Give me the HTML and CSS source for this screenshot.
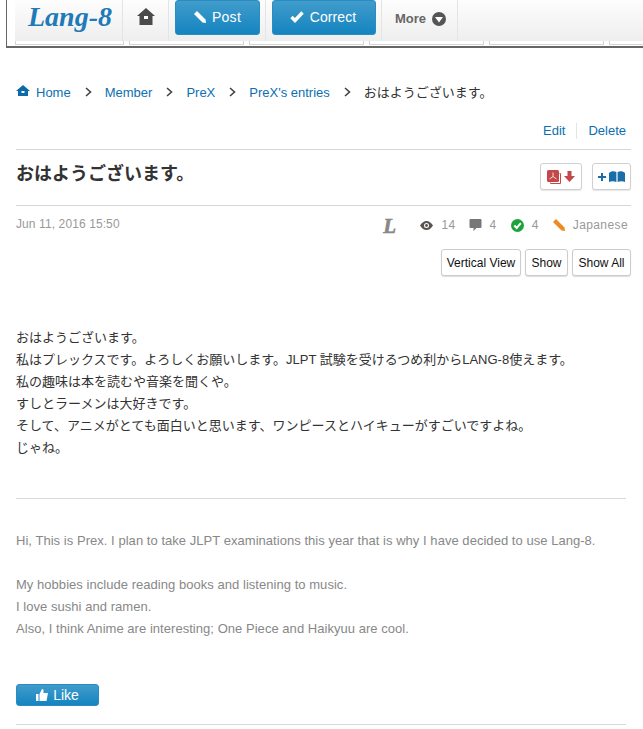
FILE: index.html
```html
<!DOCTYPE html>
<html lang="ja">
<head>
<meta charset="utf-8">
<title>おはようございます。</title>
<link rel="stylesheet" href="styles.css">
</head>
<body>
<header class="topbar">
  <div class="tabstrip">
    <span class="tabpiece t1"></span><span class="tabpiece t2"></span><span class="tabpiece t3"></span><span class="tabpiece t4"></span><span class="tabpiece t5"></span><span class="tabpiece t6"></span>
  </div>
  <nav class="nav">
    <a class="logo">Lang-8</a>
    <a class="homecell">
      <svg class="homeicon" viewBox="0 0 18 18"><path fill="#4a4a4a" d="M9 0 L18 8 L15.500 8 L15.500 17 L2.500 17 L2.500 8 L0 8 Z"/><rect x="7" y="8" width="4" height="3" fill="#fff"/></svg>
    </a>
    <div class="btncell first"><a class="bluebtn post">
      <svg class="pencil" viewBox="0 0 12 12"><path fill="#fff" d="M0 3 L3 0 L11.500 8.500 L12 12 L8.500 11.500 Z"/></svg>Post</a></div>
    <div class="btncell second"><a class="bluebtn correct">
      <svg class="check" viewBox="0 0 14 12"><path fill="none" stroke="#fff" stroke-width="3.400" d="M1.500 6 L5 9.500 L12.500 1.500"/></svg>Correct</a></div>
    <a class="more">More
      <svg class="moreicon" viewBox="0 0 14 14"><circle cx="7" cy="7" r="7" fill="#555"/><path fill="#fff" d="M3 5 H11 L7 10.500 Z"/></svg></a>
    <span class="navrest"></span>
  </nav>
</header>

<main class="page">
  <ol class="crumbs">
    <li><svg class="crumbhome" viewBox="0 0 14 12"><path fill="#0d6aa8" d="M7 0 L14 6 L12 6 L12 11 L2 11 L2 6 L0 6 Z"/><rect x="5.500" y="6" width="3" height="2" fill="#fff"/></svg><a>Home</a></li>
    <li class="sep"><svg viewBox="0 0 7 10"><path fill="none" stroke="#444" stroke-width="1.600" d="M1 1 L5.500 5 L1 9"/></svg></li>
    <li><a>Member</a></li>
    <li class="sep"><svg viewBox="0 0 7 10"><path fill="none" stroke="#444" stroke-width="1.600" d="M1 1 L5.500 5 L1 9"/></svg></li>
    <li><a>PreX</a></li>
    <li class="sep"><svg viewBox="0 0 7 10"><path fill="none" stroke="#444" stroke-width="1.600" d="M1 1 L5.500 5 L1 9"/></svg></li>
    <li><a>PreX's entries</a></li>
    <li class="sep"><svg viewBox="0 0 7 10"><path fill="none" stroke="#444" stroke-width="1.600" d="M1 1 L5.500 5 L1 9"/></svg></li>
    <li class="current">おはようございます。</li>
  </ol>

  <div class="actions"><a class="action">Edit</a><a class="action last">Delete</a></div>

  <div class="titlerow">
    <h1 class="title">おはようございます。</h1>
    <div class="titlebtns">
      <a class="iconbtn pdf">
        <svg class="pdficon" viewBox="0 0 14 14"><path fill="none" stroke="#c9474a" d="M12.500 3.500 H13.500 V13.500 H3.500 V12.500"/><rect x="0" y="0" width="12" height="12" rx="1.500" fill="#c4474a"/><path fill="none" stroke="#fff" stroke-width="0.800" d="M6 2.500 L6 6.500 M6 6.500 L2.500 9 M6 6.500 L9.500 9"/></svg>
        <svg class="arrow" viewBox="0 0 11 11"><path fill="#c4474a" d="M3.500 0 H7.500 V5 H11 L5.500 11 L0 5 H3.500 Z"/></svg>
      </a>
      <a class="iconbtn book">
        <svg class="plus" viewBox="0 0 8 8"><path fill="#1a6ea8" d="M3 0 H5 V3 H8 V5 H5 V8 H3 V5 H0 V3 H3 Z"/></svg>
        <svg class="bookicon" viewBox="0 0 16 11"><path fill="#1a6ea8" d="M0 2 C2 0 5 0 7.400 1 V11 C5 10 2 10 0 11 Z M8.600 1 C11 0 14 0 16 2 V11 C14 10 11 10 8.600 11 Z"/></svg>
      </a>
    </div>
  </div>

  <div class="metarow">
    <time class="date">Jun 11, 2016 15:50</time>
    <div class="stats">
      <span class="l-mark">L</span>
      <span class="stat eye"><svg class="eyeicon" viewBox="0 0 13 9"><path fill="#5a5450" fill-rule="evenodd" d="M0 4.500 C2 1.500 4 0 6.500 0 C9 0 11 1.500 13 4.500 C11 7.500 9 9 6.500 9 C4 9 2 7.500 0 4.500 Z M6.500 2 A2.500 2.500 0 1 0 6.500 7 A2.500 2.500 0 1 0 6.500 2 Z"/><circle cx="6.500" cy="4.500" r="1.400" fill="#5a5450"/></svg>14</span>
      <span class="stat bubble"><svg class="bubbleicon" viewBox="0 0 12 12"><path fill="#777" d="M1 0 H11 A1 1 0 0 1 12 1 V8 A1 1 0 0 1 11 9 H7 L4 12 V9 H1 A1 1 0 0 1 0 8 V1 A1 1 0 0 1 1 0 Z"/></svg>4</span>
      <span class="stat ok"><svg class="okicon" viewBox="0 0 13 13"><circle cx="6.500" cy="6.500" r="6.500" fill="#1fa23d"/><path fill="none" stroke="#fff" stroke-width="2" d="M3.300 6.500 L5.700 9 L9.800 4.200"/></svg>4</span>
      <span class="stat lang"><svg class="langicon" viewBox="0 0 12 12"><path fill="#ee8a22" d="M0 3 L3 0 L11.500 8.500 L12 12 L8.500 11.500 Z"/></svg>Japanese</span>
    </div>
  </div>

  <div class="viewbtns">
    <button class="viewbtn vertical">Vertical View</button><button class="viewbtn show">Show</button><button class="viewbtn showall">Show All</button>
  </div>

  <section class="entry">
    <p>おはようございます。</p>
    <p>私はプレックスです。よろしくお願いします。JLPT 試験を受けるつめ利からLANG-8使えます。</p>
    <p>私の趣味は本を読むや音楽を聞くや。</p>
    <p>すしとラーメンは大好きです。</p>
    <p>そして、アニメがとても面白いと思います、ワンピースとハイキューがすごいですよね。</p>
    <p>じゃね。</p>
  </section>

  <hr class="rule">

  <section class="translation">
    <p class="gap">Hi, This is Prex. I plan to take JLPT examinations this year that is why I have decided to use Lang-8.</p>
    <p>My hobbies include reading books and listening to music.</p>
    <p>I love sushi and ramen.</p>
    <p>Also, I think Anime are interesting; One Piece and Haikyuu are cool.</p>
  </section>

  <a class="bluebtn like"><svg class="thumb" viewBox="0 0 12 12"><path fill="#fff" d="M0 5 H2.500 V12 H0 Z M3.500 5 L6 0 C7.500 0 8 1.500 7.300 4 H12 L10.500 12 H3.500 Z"/></svg>Like</a>

  <hr class="rule endrule">
</main>
</body>
</html>
```

FILE: styles.css
```css
* { box-sizing: border-box; }
html, body { margin: 0; padding: 0; background: #fff; }
body {
  width: 643px;
  height: 729px;
  overflow: hidden;
  font-family: "Liberation Sans", "Noto Sans CJK JP", sans-serif;
  font-size: 13px;
  color: #333;
}
a { color: #0d6fb0; text-decoration: none; }

.topbar {
  position: relative;
  height: 48px;
  margin-left: 6px;
  border-left: 1px solid #666;
  border-bottom: 2px solid #666;
  padding: 0 0 0 8px;
  overflow: hidden;
}
.tabstrip {
  position: absolute;
  left: 8px; top: 36px;
  height: 9px;
  display: flex;
}
.tabpiece {
  display: block;
  flex: none;
  height: 9px;
  border: 1px solid #d6d6d6;
  border-top: 0;
  margin-right: 5px;
  background: #fff;
}
.t1 { width: 109px; }
.t2, .t3, .t4, .t5 { width: 115px; }
.t6 { width: 60px; margin-right: 0; }

.nav {
  position: relative;
  height: 41px;
  display: flex;
  align-items: stretch;
  background: linear-gradient(#fdfdfd, #eeeeee);
}
.logo {
  width: 108px;
  padding-left: 13px;
  font: italic bold 28px/34px "Liberation Serif", serif;
  color: #1f7ab8;
  border-right: 1px solid #e4e4e4;
  white-space: nowrap;
}
.homecell {
  width: 46px;
  border-right: 1px solid #e4e4e4;
  display: flex;
  padding: 8px 0 0 14px;
}
.homeicon { width: 18px; height: 18px; }
.btncell {
  padding-left: 6px;
  border-right: 1px solid #e4e4e4;
}
.btncell.first { width: 97px; }
.btncell.second { width: 116px; }
.bluebtn {
  display: inline-flex;
  align-items: center;
  justify-content: center;
  color: #fff;
  border-radius: 3px;
  background: linear-gradient(#419ccb, #1484c0);
  border: 1px solid #2a8dc2;
  font-size: 14px;
}
.post { width: 85px; height: 35px; letter-spacing: 0.3px; padding-bottom: 2px; }
.correct { width: 104px; height: 35px; letter-spacing: 0.1px; padding: 0 2px 2px 0; }
.pencil { width: 12px; height: 12px; margin-right: 6px; }
.check { width: 14px; height: 12px; margin-right: 6px; }
.more {
  padding: 12px 0 0 13px;
  width: 76px;
  border-right: 1px solid #e4e4e4;
  display: flex;
  align-items: flex-start;
  color: #666;
  font-weight: bold;
  font-size: 13px;
  line-height: 14px;
  white-space: nowrap;
}
.moreicon { width: 14px; height: 14px; margin-left: 6px; }
.navrest { flex: 1; }

.page { padding: 0 12px 0 16px; }

.crumbs {
  list-style: none;
  margin: 0;
  padding: 0;
  height: 20px;
  margin-top: 34px;
  display: flex;
  align-items: center;
  white-space: nowrap;
}
.crumbs li { display: flex; align-items: center; }
.crumbhome { width: 14px; height: 12px; margin: -3px 6px 0 0; }
.sep { margin: 0 13px 0 14px; }
.sep svg { width: 7px; height: 10px; display: block; }
.crumbs .current { color: #333; margin-top: -2px; }

.actions {
  display: flex;
  justify-content: flex-end;
  margin-top: 21px;
  padding-right: 5px;
  height: 16px;
  align-items: center;
}
.action { padding: 0 11px 0 0; border-right: 1px solid #e4e4e4; line-height: 16px; }
.action.last { border: 0; padding: 0 0 0 11px; }

.titlerow {
  margin-top: 10px;
  height: 57px;
  border-top: 1px solid #d6d6d6;
  border-bottom: 1px solid #d6d6d6;
  display: flex;
  justify-content: space-between;
}
.title {
  margin: 14px 0 0;
  font-size: 18px;
  line-height: 20px;
  font-weight: bold;
  color: #333;
}
.titlebtns { display: flex; gap: 10px; padding-top: 13px; }
.iconbtn {
  display: flex;
  align-items: center;
  justify-content: center;
  height: 27px;
  border: 1px solid #d0d0d0;
  border-radius: 3px;
  background: #fff;
  box-shadow: 0 1px 1px #e6e6e6;
}
.pdf { width: 42px; gap: 3px; }
.book { width: 39px; gap: 3px; }
.pdficon { width: 14px; height: 14px; }
.arrow { width: 11px; height: 11px; }
.plus { width: 8px; height: 8px; }
.bookicon { width: 16px; height: 11px; }

.metarow {
  margin-top: 11px;
  padding-right: 3px;
  height: 14px;
  display: flex;
  justify-content: space-between;
  align-items: center;
  color: #999;
  font-size: 12px;
}
.date { letter-spacing: 0.1px; }
.stats { display: flex; align-items: center; padding-top: 2px; letter-spacing: 0.4px; }
.l-mark {
  font: italic bold 21px/14px "Liberation Serif", serif;
  -webkit-text-stroke: 0.6px #888;
  color: #888;
  margin: 1px 24px 0 -1px;
}
.stat { display: flex; align-items: center; }
.eye { margin-right: 13px; }
.bubble { margin-right: 14px; }
.ok { margin-right: 14px; }
.eyeicon { width: 13px; height: 9px; margin-right: 8px; }
.bubbleicon { width: 13px; height: 12px; margin-right: 8px; }
.okicon { width: 13px; height: 13px; margin-right: 8px; }
.langicon { width: 12px; height: 12px; margin-right: 8px; }

.viewbtns {
  display: flex;
  justify-content: flex-end;
  gap: 4px;
  margin-top: 18px;
}
.viewbtn {
  height: 27px;
  padding: 0;
  border: 1px solid #ccc;
  border-radius: 3px;
  background: #fff;
  box-shadow: 0 1px 1px #ddd;
  font: 12px "Liberation Sans", sans-serif;
  color: #111;
}
.vertical { width: 80px; }
.show { width: 43px; }
.showall { width: 59px; }

.entry { margin-top: 51px; font-size: 13px; color: #333; }
.entry p { margin: 0; line-height: 22px; height: 22px; white-space: nowrap; }

.rule { border: 0; height: 1px; background: #d9d9d9; margin: 39px 5px 0 0; }

.translation { margin-top: 31px; color: #888; letter-spacing: 0.04px; }
.translation p { margin: 0; line-height: 22px; white-space: nowrap; }
.translation .gap { margin-bottom: 22px; }

.like {
  width: 83px;
  height: 22px;
  margin-top: 44px;
  font-size: 14px;
}
.thumb { width: 12px; height: 12px; margin-right: 5px; }
.endrule { margin: 18px 5px 0 0; }
```
